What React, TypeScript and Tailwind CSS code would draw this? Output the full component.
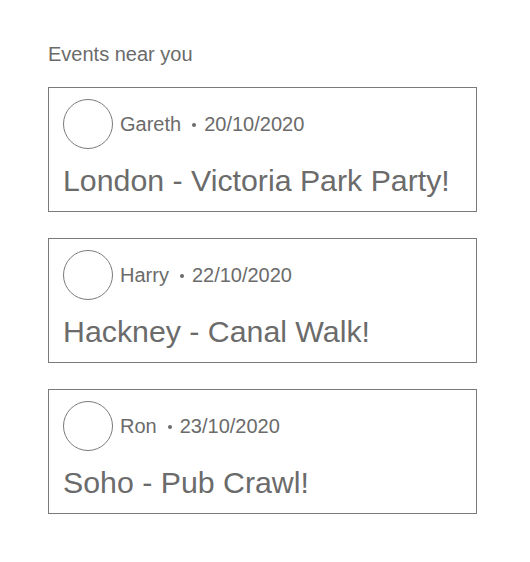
const events = [
  { name: 'Gareth', date: '20/10/2020', title: 'London - Victoria Park Party!' },
  { name: 'Harry', date: '22/10/2020', title: 'Hackney - Canal Walk!' },
  { name: 'Ron', date: '23/10/2020', title: 'Soho - Pub Crawl!' },
];

export default function App() {
  return (
    <div className="min-h-screen bg-white px-12 pt-[42px] text-[#6b6b6b] font-['Liberation_Sans',Arial,sans-serif]">
      <h2 className="text-[20px] leading-6 mb-[21px]">Events near you</h2>

      <div className="flex flex-col gap-[26px] w-[429px]">
        {events.map(ev => (
          <div key={ev.name} className="h-[125px] border border-[#7a7a7a] pt-[11px] px-[14px]">
            <div className="flex items-center">
              <div className="w-[50px] h-[50px] rounded-full border border-[#7a7a7a]" />
              <span className="ml-[7px] text-[20px]">{ev.name}</span>
              <span className="ml-[11px] mr-[8px] mt-[2px] w-[4px] h-[4px] rounded-full bg-[#6b6b6b]" />
              <span className="text-[20px]">{ev.date}</span>
            </div>
            <h3 className="mt-[14px] text-[30.3px] leading-9">{ev.title}</h3>
          </div>
        ))}
      </div>
    </div>
  );
}
